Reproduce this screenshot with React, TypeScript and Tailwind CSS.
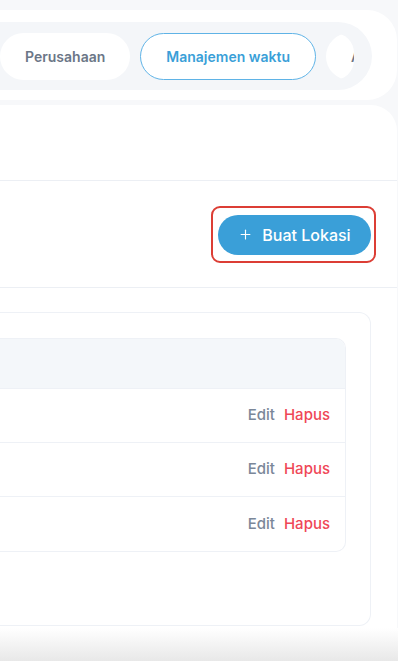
import * as React from "react"
import { Plus } from "lucide-react"

const TABS = [
    { label: "Perusahaan", active: false },
    { label: "Manajemen waktu", active: true },
    { label: "Absensi", active: false },
]

const ROWS = [1, 2, 3]

export default function App() {
    return (
        <div className="w-[398px] h-[661px] overflow-hidden bg-[#f7f8fa] font-['Inter',sans-serif] flex flex-col">
            {/* Tabs card */}
            <div className="mt-[10px] mr-[1px] h-[90px] rounded-r-[30px] bg-white pt-[12px] pr-[25px]">
                <div className="h-[68px] rounded-r-full bg-[#f4f6f9] pr-[18px] flex items-center">
                    <div className="flex-1 min-w-0 h-[47px] overflow-hidden rounded-r-[20px] flex gap-[10px]">
                        {TABS.map((t) => (
                            <div
                                key={t.label}
                                className={`shrink-0 h-[47px] rounded-full px-[25px] flex items-center text-[14px] font-semibold whitespace-nowrap ${
                                    t.active
                                        ? "border border-[#5fb3e6] bg-white text-[#3a9fd8]"
                                        : "bg-white text-[#6b7687]"
                                }`}
                            >
                                {t.label}
                            </div>
                        ))}
                    </div>
                </div>
            </div>

            {/* Content card */}
            <div className="mt-[5px] mr-[1px] h-[523px] rounded-tr-[26px] bg-white flex flex-col">
                <div className="h-[76px] border-b border-[#eceff4]" />
                <div className="h-[107px] border-b border-[#eceff4] flex items-center justify-end pr-[21px]">
                    <div className="rounded-[9px] border-2 border-[#dc3e35] pl-[5px] pr-[3px] pt-[7px] pb-[6px]">
                        <button className="h-[40px] w-[153px] rounded-full bg-[#3a9fd8] flex items-center justify-center gap-[9px] text-white text-[16px] font-medium">
                            <Plus className="h-[15px] w-[15px]" strokeWidth={1.8} />
                            Buat Lokasi
                        </button>
                    </div>
                </div>

                <div className="pt-[24px] pr-[26px] flex-1 flex flex-col">
                    <div className="flex-1 rounded-r-[12px] border border-l-0 border-[#eef1f6] pt-[25px] pr-[24px]">
                        <div className="rounded-r-[10px] border border-l-0 border-[#eef1f6] overflow-hidden">
                            <div className="h-[50px] bg-[#f4f7fa] border-b border-[#eef1f6]" />
                            {ROWS.map((r, i) => (
                                <div
                                    key={r}
                                    className={`h-[54px] flex items-center justify-end gap-[9px] pr-[15px] text-[15px] font-medium ${
                                        i < ROWS.length - 1 ? "border-b border-[#eef1f6]" : ""
                                    }`}
                                >
                                    <span className="text-[#7b8799]">Edit</span>
                                    <span className="text-[#ef4757]">Hapus</span>
                                </div>
                            ))}
                        </div>
                    </div>
                </div>
                <div className="h-[2px]" />
            </div>

            {/* Bottom fade */}
            <div className="flex-1 bg-gradient-to-b from-white to-[#e8e8e8]" />
        </div>
    )
}
